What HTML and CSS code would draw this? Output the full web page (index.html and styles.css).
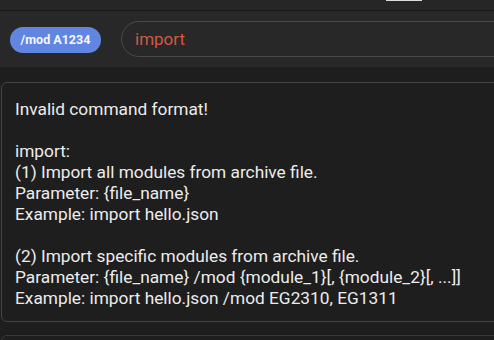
FILE: index.html
```html
<!DOCTYPE html>
<html lang="en">
<head>
  <meta charset="UTF-8">
  <meta name="viewport" content="width=device-width, initial-scale=1.0">
  <title>Module Console</title>
  <link rel="stylesheet" href="styles.css">
</head>
<body>

  <!-- Top bar (scrolled) -->
  <div class="top-strip">
    <span class="tab-mark"></span>
  </div>

  <!-- Command row -->
  <div class="command-bar">
    <span class="mod-pill">/mod A1234</span>
    <div class="command-input">import</div>
  </div>

  <!-- Output -->
  <div class="output">
    <div class="output-card">Invalid command format!

import:
(1) Import all modules from archive file.
Parameter: {file_name}
Example: import hello.json

(2) Import specific modules from archive file.
Parameter: {file_name} /mod {module_1}[, {module_2}[, ...]]
Example: import hello.json /mod EG2310, EG1311</div>
    <div class="output-card next"></div>
  </div>

</body>
</html>
```

FILE: styles.css
```css
html, body {
  margin: 0;
  padding: 0;
}
body {
  width: 494px;
  height: 340px;
  overflow: hidden;
  background-color: #1e1e1e;
  font-family: Roboto, "Noto Sans", sans-serif;
}
.top-strip {
  height: 10px;
  background-color: #262626;
  border-bottom: 1px solid #1a1a1a;
  display: flex;
}
.tab-mark {
  display: block;
  width: 36px;
  height: 1px;
  margin-left: 386px;
  background-color: #dcdcdc;
}
.command-bar {
  height: 56px;
  background-color: #282828;
  display: flex;
  align-items: center;
  padding-left: 10px;
  gap: 20px;
  width: 560px;
}
.mod-pill {
  width: 91px;
  height: 26px;
  line-height: 26px;
  border-radius: 13px;
  background-color: #6186e2;
  color: #f4f6fc;
  font-size: 12.5px;
  font-weight: bold;
  text-align: center;
  margin-top: 1px;
  flex-shrink: 0;
}
.command-input {
  flex: 1;
  height: 34px;
  line-height: 34px;
  border: 1px solid #4a4a4a;
  border-radius: 18px;
  padding-left: 13px;
  color: #cf5a44;
  font-size: 17px;
}
.output {
  padding: 15px 0 0 1px;
  width: 560px;
}
.output-card {
  border: 1px solid #444;
  border-radius: 6px;
  padding: 16px 13px 12px;
  color: #ececec;
  font-size: 17.3px;
  line-height: 21px;
  white-space: pre-wrap;
}
.next {
  margin-top: 13px;
  height: 40px;
  padding: 0;
  border-color: #3a3a3a;
}
```
